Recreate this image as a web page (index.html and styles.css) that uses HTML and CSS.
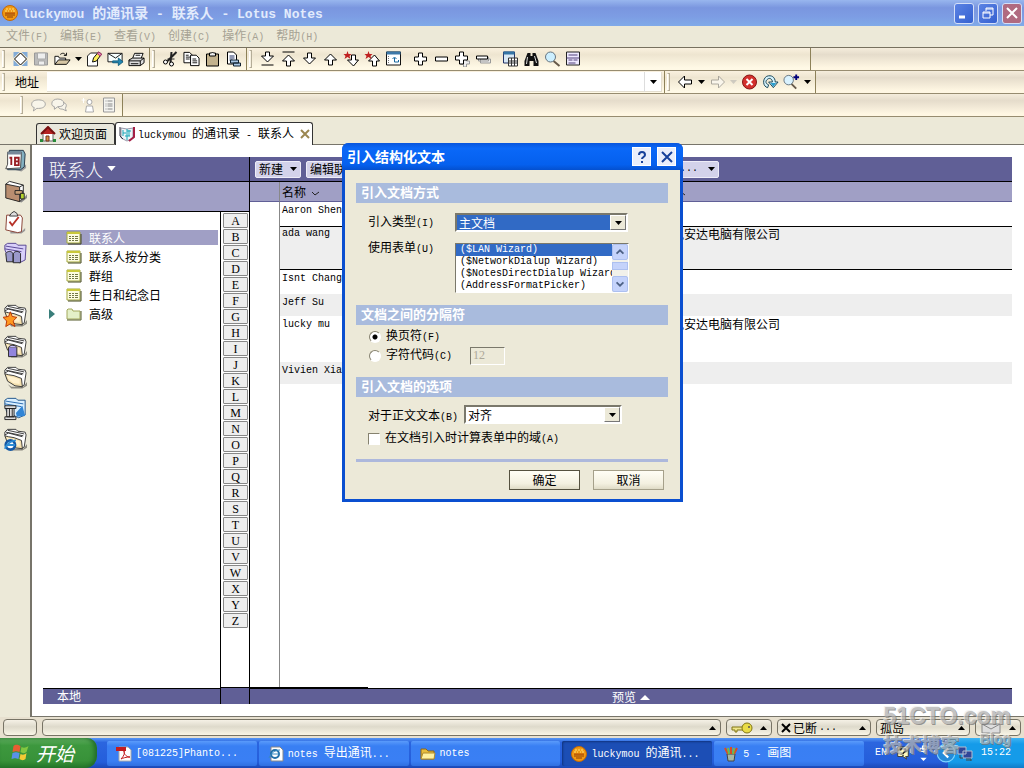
FILE: index.html
```html
<!DOCTYPE html>
<html lang="zh-CN">
<head>
<meta charset="utf-8">
<title>luckymou 的通讯录 - 联系人 - Lotus Notes</title>
<link rel="stylesheet" href="styles.css">
</head>
<body>
<svg class="defs" aria-hidden="true">
  <defs>
    <symbol id="caret" viewBox="0 0 7 4"><path d="M0 0h7L3.500 4z" fill="currentColor"/></symbol>
    <symbol id="caret-up" viewBox="0 0 7 4"><path d="M0 4h7L3.500 0z" fill="currentColor"/></symbol>
    <symbol id="down" viewBox="0 0 16 16"><path d="M6 2h4v5h4l-6 6-6-6h4z" fill="#fff" stroke="#000"/></symbol>
    <symbol id="up" viewBox="0 0 16 16"><path d="M6 14h4V9h4L8 3 2 9h4z" fill="#fff" stroke="#000"/></symbol>
    <symbol id="folder" viewBox="0 0 26 26">
      <path d="M5 20l4 3h13l4-5v4l-5 3H9z" fill="#8c8a80"/>
      <path d="M2 9V5l3-3h9l2 2 8 1 1 3-2 13-3 2" fill="#fff" stroke="#333"/>
      <path d="M3 5l19 4M5 3l18 4M2 8l4-2 15 4" stroke="#333" fill="none"/>
      <path d="M2 9l4 1 6 1 8 3 1 9-8-1-8-5z" fill="#f3dfae" stroke="#333"/>
      <path d="M4 11l8 2 6 2v5l-7-1-5-4z" fill="#fff1ce"/>
    </symbol>
    <symbol id="grid-icon" viewBox="0 0 16 14">
      <path d="M1 1h13v11H1z" fill="#fdfce0" stroke="#a2a83c"/><path d="M1 2h13" stroke="#c9c83a" stroke-width="2"/>
      <path d="M3 5h2v1H3zm3 0h2v1H6zm3 0h3v1H9zM3 7h2v1H3zm3 0h2v1H6zm3 0h3v1H9zM3 9h2v1H3zm3 0h2v1H6zm3 0h3v1H9z" fill="#727846"/><path d="M2 13h13V3" fill="none" stroke="#42461a"/>
    </symbol>
    <symbol id="lotus" viewBox="0 0 16 16">
      <circle cx="8" cy="8" r="7.500" fill="#f29a13" stroke="#c46a08"/>
      <path d="M4 8v3m2-3v5m2-5v5m2-5v5m2-5v3" stroke="#8f3c08"/><path d="M3 6h2m1 0h1m2 0h1m1 0h2M4 4h2m1 0h2m1 0h2" stroke="#ffe27a"/><path d="M3 8h10" stroke="#b75008"/>
    </symbol>
    <symbol id="speech" viewBox="0 0 20 16"><path d="M10 2c5 0 8 2 8 5s-3 5-8 5H8l-4 3 1-4C2 10 2 9 2 7c0-3 3-5 8-5z" fill="#f8f5ea" stroke="#999"/></symbol>
  </defs>
</svg>

<header class="titlebar">
  <svg class="i16"><use href="#lotus"/></svg>
  <h1><span class="lat">luckymou </span>的通讯录<span class="lat"> - </span>联系人<span class="lat"> - Lotus Notes</span></h1>
  <button class="win" aria-label="最小化"><svg viewBox="0 0 18 18"><path d="M4 13h6" stroke="#fff" stroke-width="3"/></svg></button>
  <button class="win" aria-label="还原"><svg viewBox="0 0 18 18"><path d="M7 7V4h7v7h-3M7 5h7M4 8h7v6H4zm0 1h7" fill="none" stroke="#fff"/></svg></button>
  <button class="win close" aria-label="关闭"><svg viewBox="0 0 18 18"><path d="M4 4l10 10M14 4L4 14" stroke="#fff" stroke-width="2"/></svg></button>
</header>

<nav class="menubar">
  <button>文件<span class="lat">(F)</span></button><button>编辑<span class="lat">(E)</span></button><button>查看<span class="lat">(V)</span></button><button>创建<span class="lat">(C)</span></button><button>操作<span class="lat">(A)</span></button><button>帮助<span class="lat">(H)</span></button>
</nav>

<div class="bar">
  <div class="group">
    <span class="handle"></span>
    <button aria-label="设计"><svg viewBox="0 0 16 16"><path d="M1 1h6L1 7zM15 1H9l6 6zM1 15V9l6 6zM15 15H9l6-6z" fill="#83acd8"/><path d="M8 2l6 6-6 6-6-6z" fill="#fff" stroke="#000"/></svg></button>
    <button aria-label="保存"><svg viewBox="0 0 16 16"><path d="M1 2h13v12H1z" fill="#bbb" stroke="#999"/><path d="M4 2h8v6H4zM5 10h6v4H5z" fill="#eee" stroke="#aaa"/></svg></button>
    <button aria-label="打开"><svg viewBox="0 0 19 16"><path d="M1 14V5h4l1 2h7v3" fill="#fff" stroke="#000"/><path d="M1 14l4-5h13l-4 5z" fill="#d6c6a4" stroke="#000"/><path d="M7 3c2-2 5-2 6 1m-2 0h3V1" fill="none" stroke="#000"/></svg></button>
    <button class="mini" aria-label="打开选项"><svg><use href="#caret"/></svg></button>
    <button aria-label="编辑"><svg viewBox="0 0 16 16"><path d="M1 5l3-3h7v13H1z" fill="#fff" stroke="#222"/><path d="M6 11l1-4 5-6 3 2-5 7z" fill="#fff15a" stroke="#111"/><path d="M12 1l3 2-1 2-3-2z" fill="#e090c0" stroke="#a36"/></svg></button>
    <button aria-label="发送"><svg viewBox="0 0 18 16"><path d="M1 2h15v9H1z" fill="#f7ffff" stroke="#111"/><path d="M1 2l8 5 7-5" fill="none" stroke="#111"/><path d="M6 10h6V7l5 4-5 4v-3H6z" fill="#2487b2" stroke="#146080"/></svg></button>
    <button aria-label="打印"><svg viewBox="0 0 18 16"><path d="M5 7l2-5h9l-2 5" fill="#fff" stroke="#000"/><path d="M1 9l4-2h12v5l-4 3H1z" fill="#ddd" stroke="#000"/><path d="M1 10h12l4-3M13 10v5M3 13h8M8 4h5" fill="none" stroke="#000"/></svg></button>
  </div>
  <div class="group">
    <span class="handle"></span>
    <button aria-label="剪切"><svg viewBox="0 0 16 16"><path d="M14 1L5 10M9 1L8 12" stroke="#222" stroke-width="2"/><circle cx="3" cy="11" r="2" fill="#fff" stroke="#000"/><circle cx="9" cy="13" r="2" fill="#fff" stroke="#000"/><path d="M5 8h7" stroke="#222"/></svg></button>
    <button aria-label="复制"><svg viewBox="0 0 18 16"><path d="M1 1h6l3 3v8H1z" fill="#fff" stroke="#000"/><path d="M3 4h3M3 6h5M3 8h4" stroke="#111"/><path d="M8 4h6l3 3v8H8z" fill="#fff" stroke="#000"/><path d="M10 8h4m-4 2h5m-5 2h5" stroke="#111"/></svg></button>
    <button aria-label="粘贴"><svg viewBox="0 0 16 16"><path d="M2 3h12v12H2z" fill="#c3b28d" stroke="#000"/><path d="M5 5V2h2l1-1 1 1h2v3z" fill="#eee" stroke="#000"/></svg></button>
    <button aria-label="选择性粘贴"><svg viewBox="0 0 16 16"><path d="M2 1h6l3 3v9H2z" fill="#fff" stroke="#000"/><path d="M4 5h5M4 7h5M4 9h3" stroke="#236"/><path d="M5 9h8v3H5zM8 12h7v3H8z" fill="#a9c7e4" stroke="#123"/></svg></button>
  </div>
  <div class="group wide">
    <span class="handle"></span>
    <button aria-label="末尾"><svg viewBox="0 0 16 16"><path d="M6 1h4v4h4l-6 6-6-6h4z" fill="#fff" stroke="#000"/><path d="M2 14h12" stroke="#000"/></svg></button>
    <button aria-label="开头"><svg viewBox="0 0 16 16"><path d="M6 15h4v-5h4L8 4l-6 6h4z" fill="#fff" stroke="#000"/><path d="M2 1h12" stroke="#000"/></svg></button>
    <button aria-label="下一个"><svg><use href="#down"/></svg></button>
    <button aria-label="上一个"><svg><use href="#up"/></svg></button>
    <button aria-label="下一未读"><svg viewBox="0 0 16 16"><path d="M8 4h4v5h3l-5 6-6-6h4z" fill="#fff" stroke="#000"/><path d="M4 0l1 3h3L6 5l1 3-3-2-3 2 1-3-2-2h3z" fill="#c02020"/></svg></button>
    <button aria-label="上一未读"><svg viewBox="0 0 16 16"><path d="M8 15h4v-5h3l-5-6-6 6h4z" fill="#fff" stroke="#000"/><path d="M4 0l1 3h3L6 5l1 3-3-2-3 2 1-3-2-2h3z" fill="#c02020"/></svg></button>
    <button aria-label="导航"><svg viewBox="0 0 16 16"><path d="M1 1h14v13H1z" fill="#fff" stroke="#111"/><path d="M1 2h14" stroke="#3d78a8" stroke-width="3"/><path d="M3 5v8" stroke="#777" stroke-dasharray="1 1"/><path d="M7 8l2-2 2 2M9 7v4h4V9" fill="none" stroke="#17679e"/></svg></button>
    <button class="space" aria-label="展开"><svg viewBox="0 0 16 16"><path d="M6 2h4v4h4v4h-4v4H6v-4H2V6h4z" fill="#fff" stroke="#000"/></svg></button>
    <button aria-label="折叠"><svg viewBox="0 0 16 16"><path d="M2 6h12v4H2z" fill="#fff" stroke="#000"/></svg></button>
    <button aria-label="全部展开"><svg viewBox="0 0 16 16"><path d="M9 7h3v3h3v3h-3v3H9v-3H6" fill="#eee" stroke="#999"/><path d="M5 1h4v4h4v4H9v4H5V9H1V5h4z" fill="#fff" stroke="#000"/></svg></button>
    <button aria-label="全部折叠"><svg viewBox="0 0 16 16"><path d="M5 8h10v4H5zM3 6h10v4H3z" fill="#eee" stroke="#999"/><path d="M1 5h11v3H1z" fill="#fff" stroke="#000"/></svg></button>
    <button class="space" aria-label="日历"><svg viewBox="0 0 16 16"><path d="M1 1h11v11H1z" fill="#d8e8f5" stroke="#236"/><path d="M1 2h11" stroke="#3474a5" stroke-width="3"/><path d="M6 7h9v8H6zM6 10h9M6 12h9M9 7v8m3-8v8" fill="#fff" stroke="#333"/></svg></button>
    <button aria-label="查找"><svg viewBox="0 0 16 16"><path d="M4 2h3v3h2V2h3l3 8v5h-5v-5H6v5H1v-5z" fill="#111"/><path d="M4 6l-1 7m8-8l2 7" stroke="#ddd"/></svg></button>
    <button aria-label="搜索"><svg viewBox="0 0 16 16"><path d="M9 10l6 5" stroke="#655949" stroke-width="2"/><circle cx="6" cy="6" r="5" fill="#ccefff" stroke="#657480"/></svg></button>
    <button aria-label="属性"><svg viewBox="0 0 16 16"><path d="M1 1h13v13H1z" fill="#eee9ff" stroke="#222"/><path d="M1 7h13M3 4h9M3 9h4m1 0h4M3 12h7" stroke="#514078"/></svg></button>
  </div>
</div>

<div class="bar">
  <div class="group address">
    <span class="handle"></span>
    <label for="addr">地址</label>
    <div class="combo"><input id="addr" type="text"><button aria-label="地址列表"><svg class="c"><use href="#caret"/></svg></button></div>
  </div>
  <div class="group browse">
    <span class="handle"></span>
    <button aria-label="后退"><svg viewBox="0 0 16 16"><path d="M1 8l6-6v4h7v4H7v4z" fill="#fff" stroke="#000"/></svg></button>
    <button class="mini" aria-label="后退列表"><svg><use href="#caret"/></svg></button>
    <button class="dim" aria-label="前进"><svg viewBox="0 0 16 16"><path d="M15 8L9 2v4H2v4h7v4z" fill="#fff" stroke="#666"/></svg></button>
    <button class="mini dim" aria-label="前进列表"><svg><use href="#caret"/></svg></button>
    <button aria-label="停止"><svg viewBox="0 0 16 16"><circle cx="8" cy="8" r="7" fill="#d3302d" stroke="#851514"/><path d="M5 5l6 6m0-6l-6 6" stroke="#fff" stroke-width="2"/></svg></button>
    <button aria-label="刷新"><svg viewBox="0 0 18 16"><path d="M6 14C1 13 0 5 5 2c5-2 9 1 9 6h3l-5 6-5-6h4c0-3-3-5-5-3-3 2-2 5 1 6z" fill="#d3f1fb" stroke="#123f52"/><path d="M9 9h6l-3 4z" fill="#2a9dcc"/></svg></button>
    <button aria-label="搜索"><svg viewBox="0 0 18 16"><path d="M9 10l5 5" stroke="#655949" stroke-width="2"/><circle cx="6" cy="6" r="5" fill="#d9f2ff" stroke="#657480"/><path d="M14 0v6m-3-3h6" stroke="#00007a" stroke-width="2"/></svg></button>
    <button class="mini" aria-label="搜索列表"><svg><use href="#caret"/></svg></button>
  </div>
</div>

<div class="bar">
  <div class="group chat">
    <span class="handle"></span>
    <button aria-label="聊天"><svg><use href="#speech"/></svg></button>
    <button aria-label="群聊"><svg viewBox="0 0 20 16"><path d="M12 5c4 0 6 1 6 4l-1 3 1 3-4-2c-4 0-6-2-6-4s1-4 4-4z" fill="#f8f5ea" stroke="#999"/><path d="M8 1c4 0 7 2 7 5s-3 4-7 4l-4 3v-3C1 9 1 8 1 6c0-3 3-5 7-5z" fill="#f8f5ea" stroke="#999"/></svg></button>
    <button class="space" aria-label="人员"><svg viewBox="0 0 16 16"><circle cx="9" cy="5" r="2.500" fill="#fff" stroke="#aaa"/><path d="M5 15l1-6h6l1 6z" fill="#fff" stroke="#aaa"/><path d="M3 1v5M1 3h4" stroke="#fff"/></svg></button>
    <button aria-label="列表"><svg viewBox="0 0 16 16"><path d="M2 1h11v14H2z" fill="#f4f4f0" stroke="#999"/><path d="M4 4h1m1 0h5M4 7h1m1 0h5M4 9h1m1 0h5M4 12h1m1 0h5" stroke="#888"/></svg></button>
  </div>
</div>

<div class="tabs">
  <a class="tab" href="#home"><svg class="i16" viewBox="0 0 16 16"><path d="M3 7h10v8H3z" fill="#fff" stroke="#666"/><path d="M1 8l7-7 7 7" fill="#b52424" stroke="#711" stroke-width="2"/><path d="M6 10h3v5H6z" fill="#d89040" stroke="#732"/><path d="M0 13h3v3H0m13-3h3v3h-3" fill="#278a38"/></svg>欢迎页面</a>
  <a class="tab on" href="#contacts"><svg class="i16" viewBox="0 0 16 16"><path d="M2 2l6 1 6-1v10l-6 3-6-3z" fill="#eef4f7" stroke="#99a"/><path d="M8 3v11M4 4v6m0-3h3m3-3v6M8 5h4M6 10h5" stroke="#18a7b9"/><path d="M1 1v9l3 3" fill="none" stroke="#334"/><path d="M15 1v10l-5 4" fill="none" stroke="#a52045" stroke-width="2"/></svg><span><span class="lat">luckymou </span>的通讯录<span class="lat"> - </span>联系人</span><svg class="x" viewBox="0 0 10 10"><path d="M1 1l8 8M9 1L1 9" stroke="#9b8751" stroke-width="2"/></svg></a>
</div>

<main>
  <aside class="bookmarks">
    <a href="#cal" aria-label="日历"><svg viewBox="0 0 26 26"><path d="M5 21h16l4-4v4l-5 4z" fill="#999"/><path d="M7 2h15l2 4-1 14-4 3H5z" fill="#83b0c1" stroke="#234"/><path d="M5 4h15l-1 17-16 1 2-5z" fill="#fff" stroke="#444"/><path d="M5 5h15" stroke="#789" stroke-width="3"/><path d="M7 10h2v8m4-8h4v8h-4zm0 4h4" fill="none" stroke="#981e24" stroke-width="2"/></svg></a>
    <a href="#book" aria-label="通讯录"><svg viewBox="0 0 26 26"><path d="M8 21h14l4-5v4l-6 5z" fill="#888"/><path d="M3 5l4-3 15 4v14l-4 4z" fill="#fff" stroke="#222"/><path d="M3 5l15 3v16L3 20z" fill="#b98e70" stroke="#222"/><path d="M18 8l4-2" stroke="#222"/><path d="M13 12h8v4h-8z" fill="#c8a078" stroke="#222"/><path d="M19 15h4v6h-4z" fill="#b6d72e" stroke="#222"/></svg></a>
    <a href="#todo" aria-label="待办"><svg viewBox="0 0 26 26"><path d="M8 22h13l3-3v3l-4 3H8z" fill="#999"/><path d="M4 5h15l2 3-1 15-4 1L3 21z" fill="#fff" stroke="#833a2c"/><path d="M7 6l2-3 3-2 3 2 1 3z" fill="#ddd" stroke="#333"/><path d="M7 12l3 4 7-9" fill="none" stroke="#b73228" stroke-width="2"/></svg></a>
    <a href="#rep" aria-label="复本"><svg viewBox="0 0 26 26"><path d="M2 9V4l3-2h9l2 2h9l-1 16-6 3-13-7z" fill="#d8cffa" stroke="#52418f"/><path d="M3 5l19 3M2 8l18 3" stroke="#52418f"/><path d="M3 13c2-3 6-3 8 0v9H4zM11 13c2-3 6-3 8 0v10h-8z" fill="#9b9acb" stroke="#222"/></svg></a>
    <a class="later" href="#fav" aria-label="收藏"><svg viewBox="0 0 26 26"><use href="#folder"/><path d="M8 9l2 5 5 1-4 4 2 6-5-3-5 3 1-6-4-4 6-1z" fill="#ff9820" stroke="#b52e00"/></svg></a>
    <a href="#db" aria-label="数据库"><svg viewBox="0 0 26 26"><use href="#folder"/><path d="M6 14h9v10H6z" fill="#9285dd" stroke="#222"/><path d="M6 14c1-3 8-3 9 0" fill="#cac2ff" stroke="#222"/></svg></a>
    <a href="#more" aria-label="更多书签"><svg viewBox="0 0 26 26"><use href="#folder"/></svg></a>
    <a href="#hist" aria-label="历史"><svg viewBox="0 0 26 26"><path d="M2 9V4l3-2h9l2 2h8v16l-7 3-13-6z" fill="#d9efff" stroke="#174d86"/><path d="M3 5l19 3M2 8l18 3" stroke="#2265ad"/><path d="M14 18l7-8 3 11-9 1z" fill="#3185d5"/><path d="M2 10h12v3H2zM4 13h8v9H4zM2 22h12v3H2z" fill="#ddd" stroke="#222"/><path d="M7 13v9m3-9v9" stroke="#222"/></svg></a>
    <a href="#ie" aria-label="浏览器"><svg viewBox="0 0 26 26"><use href="#folder"/><circle cx="8" cy="19" r="5" fill="#fff" stroke="#1559a5" stroke-width="3"/><path d="M4 19h9M2 23c2-5 7-9 12-9" fill="none" stroke="#2d8dd5" stroke-width="2"/></svg></a>
  </aside>

  <div class="workspace">
    <section class="left">
      <div class="left-title"><button>联系人<svg viewBox="0 0 10 6"><path d="M0 0h10L5 6z" fill="#fff"/></svg></button></div>
      <div class="left-sub"></div>
      <div class="left-body">
        <div class="nav-pane">
          <nav class="views">
            <a class="on" href="#v1"><i></i><svg><use href="#grid-icon"/></svg>联系人</a>
            <a href="#v2"><i></i><svg><use href="#grid-icon"/></svg>联系人按分类</a>
            <a href="#v3"><i></i><svg><use href="#grid-icon"/></svg>群组</a>
            <a href="#v4"><i></i><svg><use href="#grid-icon"/></svg>生日和纪念日</a>
            <a href="#v5"><i><svg viewBox="0 0 6 10"><path d="M0 0l6 5-6 5z" fill="#397e7a"/></svg></i><svg viewBox="0 0 16 14"><path d="M1 12V3l1-1h4l1 2h7v8z" fill="#e4f0c8" stroke="#a2a85c"/><path d="M1 13h14V4" fill="none" stroke="#555b2a"/></svg>高级</a>
          </nav>
          <footer>本地</footer>
        </div>
        <div class="alpha">
          <div class="letters"><button>A</button><button>B</button><button>C</button><button>D</button><button>E</button><button>F</button><button>G</button><button>H</button><button>I</button><button>J</button><button>K</button><button>L</button><button>M</button><button>N</button><button>O</button><button>P</button><button>Q</button><button>R</button><button>S</button><button>T</button><button>U</button><button>V</button><button>W</button><button>X</button><button>Y</button><button>Z</button></div>
          <footer></footer>
        </div>
      </div>
    </section>
    <section class="right">
      <div class="actions">
        <button>新建<svg class="c"><use href="#caret"/></svg></button>
        <button>编辑联系人</button>
        <button class="more"><span class="lat">...</span><svg class="c"><use href="#caret"/></svg></button>
      </div>
      <div class="table-wrap">
        <table>
          <thead><tr><th class="gut"></th><th class="name">名称<svg viewBox="0 0 9 5"><path d="M1 1l3 3 4-3" fill="none" stroke="#222"/></svg></th><th><svg viewBox="0 0 9 5"><path d="M1 4l3-3 4 3" fill="none" stroke="#222"/></svg></th></tr></thead>
          <tbody>
            <tr><td class="gut"></td><td class="lat">Aaron Shen</td><td></td></tr>
            <tr class="sel"><td class="gut"></td><td class="lat">ada wang</td><td>凯安达电脑有限公司</td></tr>
            <tr><td class="gut"></td><td class="lat">Isnt Chang</td><td></td></tr>
            <tr class="alt"><td class="gut"></td><td class="lat">Jeff Su</td><td></td></tr>
            <tr class="tall"><td class="gut"></td><td class="lat">lucky mu</td><td>凯安达电脑有限公司</td></tr>
            <tr class="alt"><td class="gut"></td><td class="lat">Vivien Xiao</td><td></td></tr>
          </tbody>
        </table>
        <div class="rest"></div>
        <div class="end-line"></div>
      </div>
      <footer><button>预览<svg viewBox="0 0 10 6"><path d="M0 6h10L5 1z" fill="#fff"/></svg></button></footer>
    </section>
  </div>
</main>

<div class="status">
  <span class="box first"></span>
  <button class="box grow" aria-label="消息"><svg class="c"><use href="#caret-up"/></svg></button>
  <button class="box key" aria-label="安全"><svg class="ico" viewBox="0 0 22 12"><path d="M13 5H1v3h3v2h2V8h7" fill="#eee58a" stroke="#817614"/><ellipse cx="16" cy="6" rx="5" ry="5" fill="#e9dc47" stroke="#817614"/><circle cx="18" cy="5" r="1" fill="#555"/></svg><svg class="c"><use href="#caret-up"/></svg></button>
  <button class="box mid"><svg class="x" viewBox="0 0 10 10"><path d="M1 1l8 8M9 1L1 9" stroke="#000" stroke-width="2"/></svg>已断<span class="lat">...</span><svg class="c"><use href="#caret-up"/></svg></button>
  <button class="box mid">孤岛<svg class="c"><use href="#caret-up"/></svg></button>
  <button class="box key" aria-label="邮件"><svg class="ico" viewBox="0 0 22 12"><path d="M2 2h18v9H2z" fill="#ddd" stroke="#888"/><path d="M2 2l9 5 9-5" fill="none" stroke="#888"/></svg><svg class="c"><use href="#caret-up"/></svg></button>
</div>

<div class="taskbar">
  <button class="start"><svg viewBox="0 0 18 18"><path d="M2 2c3-2 4-1 7 0L8 8C5 7 4 7 1 8z" fill="#e85d32"/><path d="M10 3c2 1 4 1 7-1l-2 6c-3 2-4 1-6 0z" fill="#82c740"/><path d="M1 9c3-1 4-1 7 0l-1 6c-3-1-4-1-7 0z" fill="#5991e8"/><path d="M9 10c2 1 4 1 6-1l-1 6c-3 2-4 1-6 0z" fill="#f3ca35"/></svg>开始</button>
  <div class="tasks">
    <button><svg class="i16" viewBox="0 0 16 16"><path d="M3 1h9l3 3v11H3z" fill="#fff" stroke="#aaa"/><path d="M0 1h10v4H0z" fill="#c31c20"/><path d="M5 13c3-3 4-6 3-8 0 4 3 6 6 6-4 0-7 1-9 2z" fill="none" stroke="#c31c20"/></svg><span class="lat">[081225]Phanto...</span></button>
    <button><svg class="i16" viewBox="0 0 16 16"><path d="M3 1h9l3 3v11H3z" fill="#fff" stroke="#888"/><circle cx="7" cy="8" r="4" fill="none" stroke="#226fa9" stroke-width="2"/><path d="M4 8h7M1 12c2-5 6-8 11-8" fill="none" stroke="#368ac4"/></svg><span><span class="lat">notes </span>导出通讯<span class="lat">...</span></span></button>
    <button><svg class="i16" viewBox="0 0 16 16"><path d="M1 13V3h5l2 2h6v8z" fill="#e7bd3d" stroke="#8d671a"/><path d="M1 13l2-6h12l-1 6z" fill="#fff1a0" stroke="#b18c2e"/></svg><span class="lat">notes</span></button>
    <button class="on"><svg class="i16"><use href="#lotus"/></svg><span><span class="lat">luckymou </span>的通讯<span class="lat">...</span></span></button>
    <button><svg class="i16" viewBox="0 0 16 16"><path d="M4 8h8l-1 7H5z" fill="#a8b7a5" stroke="#444"/><path d="M5 8L2 2m6 6V1m3 7l3-6" stroke="#d94c24" stroke-width="2"/><path d="M6 8L5 2m5 6l1-6" stroke="#72bd42" stroke-width="2"/></svg><span><span class="lat">5 - </span>画图</span></button>
  </div>
  <div class="lang"><span class="lat">EN</span><svg class="i16" viewBox="0 0 16 16"><path d="M2 1h12v11h-3l1 3-4-3H2z" fill="#fff9bd" stroke="#333"/><path d="M5 5c0-3 6-3 6 0 0 2-3 2-3 4m0 1v1" fill="none" stroke="#222" stroke-width="2"/></svg><svg class="lang-opt" viewBox="0 0 8 16"><path d="M3 1h4v3H3zM1 3h4v3H1z" fill="#3269cc" stroke="#fff"/><path d="M1 12h6l-3 3z" fill="#fff"/></svg></div>
  <div class="tray"><button aria-label="显示图标"><svg viewBox="0 0 18 18"><circle cx="9" cy="9" r="8" fill="#238bd9" stroke="#7bd3ff"/><path d="M11 5L7 9l4 4" fill="none" stroke="#fff" stroke-width="2"/></svg></button><svg class="i16" viewBox="0 0 16 16"><path d="M1 2h8v7H1zM6 6h9v7H6z" fill="#304698" stroke="#b4bed0"/><path d="M3 10v3h3m3 1h5v2H9" fill="none" stroke="#444"/></svg><span class="lat clock">15:22</span></div>
</div>

<form class="dialog" role="dialog" aria-labelledby="dt">
  <div class="d-title"><h2 id="dt">引入结构化文本</h2>
    <button type="button" aria-label="帮助"><svg viewBox="0 0 16 16"><path d="M5 6c0-4 6-4 6 0 0 2-3 2-3 4m0 2v2" fill="none" stroke="#17419a" stroke-width="2"/></svg></button>
    <button type="button" aria-label="关闭"><svg viewBox="0 0 16 16"><path d="M3 3l10 10M13 3L3 13" stroke="#17419a" stroke-width="2"/></svg></button>
  </div>
  <div class="d-body">
    <h3>引入文档方式</h3>
    <div class="row r1"><label for="type">引入类型<span class="lat">(I)</span></label><div class="drop"><select id="type" class="hot"><option>主文档</option></select><span class="btn"><svg class="c"><use href="#caret"/></svg></span></div></div>
    <div class="row r2"><label for="form">使用表单<span class="lat">(U)</span></label>
      <div class="list"><select id="form" size="4"><option class="cur">($LAN Wizard)</option><option>($NetworkDialup Wizard)</option><option>($NotesDirectDialup Wizard)</option><option>(AddressFormatPicker)</option></select>
      <div class="scroll"><span><svg viewBox="0 0 14 14"><path d="M3 9l4-4 4 4" fill="none" stroke="#4d6185" stroke-width="2"/></svg></span><b></b><span><svg viewBox="0 0 14 14"><path d="M3 5l4 4 4-4" fill="none" stroke="#4d6185" stroke-width="2"/></svg></span></div></div></div>
    <h3>文档之间的分隔符</h3>
    <div class="checks">
      <div><input type="radio" name="sep" id="ff" checked><label for="ff">换页符<span class="lat">(F)</span></label></div>
      <div><input type="radio" name="sep" id="cc"><label for="cc">字符代码<span class="lat">(C)</span></label><input class="code" type="text" value="12" disabled aria-label="代码"></div>
    </div>
    <h3>引入文档的选项</h3>
    <div class="row r3"><label for="body">对于正文文本<span class="lat">(B)</span></label><div class="drop"><select id="body"><option>对齐</option></select><span class="btn"><svg class="c"><use href="#caret"/></svg></span></div></div>
    <div class="checks one"><div><input type="checkbox" id="calc"><label for="calc">在文档引入时计算表单中的域<span class="lat">(A)</span></label></div></div>
    <hr>
    <div class="buttons"><button type="button" class="def">确定</button><button type="button">取消</button></div>
  </div>
</form>
<div class="watermark" aria-hidden="true"><strong>51CTO.com</strong><span>技术博客<em>Blog</em></span></div>
</body>
</html>
```

FILE: styles.css
```css
* { box-sizing: border-box; }
body {
  margin: 0;
  height: 100vh;
  min-height: 700px;
  display: flex;
  flex-direction: column;
  position: relative;
  overflow: hidden;
  background: #ece9d8;
  color: #000;
  font: 12px/16px "Noto Sans CJK SC", sans-serif;
}
button, input, select { font: inherit; color: inherit; margin: 0; padding: 0; }
button { border: 0; background: none; white-space: nowrap; }
a { color: inherit; text-decoration: none; }
h1, h2, h3 { margin: 0; }
svg { display: block; flex: none; }
.defs { position: absolute; width: 0; height: 0; }
.lat { font-family: "Liberation Mono", monospace; font-size: 10px; white-space: pre; }
.i16 { width: 16px; height: 16px; }
.c { width: 7px; height: 4px; }

.titlebar {
  flex: none;
  height: 26px;
  padding: 0 2px;
  display: flex;
  align-items: center;
  gap: 4px;
  color: #e2ebfc;
  background: linear-gradient(#98b6ee, #7a96df 30%, #7d9de4 65%, #80aae8);
}
.titlebar h1 { flex: 1; font-size: 14px; line-height: 24px; white-space: nowrap; }
.titlebar h1 .lat { font-size: 13px; }
.win { width: 20px; height: 21px; border: 1px solid #d4dff8; border-radius: 3px; background: linear-gradient(135deg, #5c83e4, #3460d0); }
.win.close { background: #b06a80; }

.menubar { flex: none; height: 22px; display: flex; gap: 12px; padding: 1px 6px 0; color: #a6a294; border-bottom: 1px solid #77715f; }
.menubar button { height: 19px; }

.bar { flex: none; height: 23px; display: flex; border-bottom: 1px solid #978c70; background: linear-gradient(#f5eddc, #e5dccb 30%, #fff7e3 90%); }
.group { display: flex; align-items: center; padding: 0 2px; border-right: 1px solid #8d8159; background: linear-gradient(#faf1df, #eee5d0 30%, #fff9e6 90%); }
.group.wide { width: 564px; }
.group button { width: 21px; height: 20px; display: grid; place-items: center; }
.group button svg { width: 17px; height: 16px; }
.group .mini { width: 11px; }
.group .mini svg { width: 7px; height: 4px; }
.handle { width: 3px; height: 18px; margin-right: 5px; border: 1px solid #b5ad98; border-left-color: #fff; background: #f5efdf; }
.group .space { margin-left: 6px; }
.dim { color: #aaa; opacity: .5; }
.address { flex: 0 1 665px; }
.address label { width: 37px; padding-left: 5px; white-space: nowrap; }
.combo { flex: 1; display: flex; height: 20px; background: #fff; border: 1px solid #e4decf; border-width: 0 1px 1px 0; }
.combo input { flex: 1; min-width: 0; border: 0; background: none; }
.combo button { width: 17px; border-left: 1px solid #ddd; }
.combo button .c { width: 7px; height: 4px; }
.browse { padding-right: 2px; }
.chat { width: 123px; padding-left: 20px; }
.group.chat .space { margin-left: 8px; }

.tabs { flex: none; height: 28px; padding-left: 36px; display: flex; align-items: flex-end; border-bottom: 1px solid #77746a; }
.tab { height: 21px; padding: 0 7px 0 3px; display: flex; align-items: center; gap: 3px; border: 1px solid #333; border-bottom: 0; border-radius: 3px 3px 0 0; background: #e8e7dc; white-space: nowrap; }
.tab.on { height: 23px; margin-bottom: -1px; padding-right: 2px; background: #fff; }
.x { width: 10px; height: 10px; }
.tab .x { margin-left: 3px; }

main { flex: 1; min-height: 0; display: flex; }
.bookmarks { flex: none; width: 30px; padding: 3px 0 0 3px; }
.bookmarks a { display: block; height: 31px; }
.bookmarks svg { width: 24px; height: 25px; }
.bookmarks .later { margin-top: 31px; }
.workspace { flex: 1; min-width: 0; display: flex; padding: 12px 12px 12px 11px; background: #fff; border-left: 2px solid #77746a; border-bottom: 1px solid #77746a; }
.left { flex: none; width: 207px; display: flex; flex-direction: column; border-right: 1px solid #000; }
.left-title { height: 25px; background: #605f96; border-bottom: 1px solid #000; color: #fff; }
.left-title button { display: flex; align-items: center; gap: 4px; height: 23px; padding-left: 6px; font-size: 18px; font-weight: 300; }
.left-title svg { width: 9px; height: 5px; }
.left-sub { height: 30px; background: #a09fc5; border-bottom: 1px solid #000; }
.left-body { flex: 1; display: flex; }
.nav-pane { flex: 1; display: flex; flex-direction: column; }
.views { flex: 1; padding: 18px 2px 0 0; }
.views a { display: flex; align-items: center; height: 15px; margin-bottom: 4px; }
.views i { width: 23px; padding-left: 6px; }
.views i svg { width: 6px; height: 10px; }
.views a > svg { width: 16px; height: 14px; margin-right: 7px; }
.views .on { background: #a09fc5; color: #fff; }
.left footer, .right footer { flex: none; height: 16px; border-top: 1px solid #000; background: #605f96; color: #fff; line-height: 14px; }
.nav-pane footer { padding-left: 14px; }
.alpha { width: 29px; display: flex; flex-direction: column; border-left: 1px solid #000; }
.alpha .letters { flex: 1; padding: 1px 1px 0 2px; display: flex; flex-direction: column; gap: 1px; }
.alpha button { height: 15px; border: 1px solid #888; border-radius: 1px; background: #eee; font: 12px/12px "Liberation Serif", serif; }
.left .alpha footer { height: 17px; }

.right { flex: 1; min-width: 0; display: flex; flex-direction: column; }
.actions { height: 25px; display: flex; align-items: center; gap: 5px; padding: 0 5px; background: #605f96; border-bottom: 1px solid #000; }
.actions button { display: flex; align-items: center; gap: 7px; height: 17px; padding: 0 3px; border: 1px solid #eeedf8; border-radius: 2px; background: #d3d2ea; }
.actions .more { width: 60px; margin-left: 280px; justify-content: flex-end; gap: 10px; }
.table-wrap { flex: 1; display: flex; flex-direction: column; }
table { width: 100%; border-collapse: separate; border-spacing: 0; table-layout: fixed; }
th { height: 20px; padding: 0 2px; text-align: left; font-weight: 400; background: #a09fc5; border-bottom: 1px solid #605f96; line-height: 16px; }
th svg { display: inline-block; width: 9px; height: 5px; margin-left: 5px; vertical-align: middle; }
.gut { width: 30px; border-right: 1px solid #888; background: #fff; }
th.gut { background: #a09fc5; }
.name { width: 390px; }
td { height: 24px; padding: 0 2px; vertical-align: top; line-height: 16px; }
td.lat { line-height: 18px; }
.tall td { height: 46px; }
.sel td { height: 44px; }
.sel td:not(.gut) { background: #eee; border-top: 1px solid #000; border-bottom: 1px solid #000; line-height: 14px; }
.alt td { height: 22px; }
.alt td:not(.gut) { background: #eee; }
.rest { flex: 1; width: 30px; border-right: 1px solid #888; }
.end-line { width: 118px; height: 1px; background: #000; }
.right footer { display: flex; justify-content: center; }
.right footer button { display: flex; align-items: center; gap: 4px; }
.right footer svg { width: 10px; height: 6px; }

.status { flex: none; height: 21px; display: flex; gap: 5px; padding: 2px 3px 2px 3px; background: #e7e0cf; }
.box { display: flex; align-items: center; gap: 2px; height: 17px; padding: 0 4px; border: 1px solid #777365; border-radius: 4px; background: linear-gradient(#f5f1e6, #dedacb 45%, #f9f5e6); }
.box .c { margin-left: auto; }
.first { width: 34px; }
.grow { flex: 1; }
.key { width: 46px; }
.mid { width: 94px; padding-left: 3px; }
.ico { width: 22px; height: 12px; }

.taskbar { flex: none; height: 30px; display: flex; align-items: stretch; color: #fff; background: linear-gradient(#5596f5, #2b65df 15%, #245edb 80%, #1b48b5); }
.start { width: 97px; display: flex; align-items: center; gap: 6px; padding-left: 11px; border-radius: 0 10px 12px 0; background: linear-gradient(#60ae60, #3d983e 25%, #389239 75%, #267a2a); font-size: 19px; font-style: italic; box-shadow: inset -3px 0 4px #226d2a; }
.start svg { width: 19px; height: 18px; }
.tasks { flex: 1; min-width: 0; display: flex; gap: 2px; padding: 3px 11px 2px 10px; }
.tasks button { flex: 0 1 150px; min-width: 0; display: flex; align-items: center; gap: 4px; padding-left: 9px; border-radius: 2px; background: linear-gradient(#5a9bfb, #397ff3 20%, #3a7ff4 80%, #3070e0); overflow: hidden; }
.tasks .on { background: #1c4eb5; box-shadow: inset 1px 1px 2px #11347e; }
.lang { width: 73px; display: flex; align-items: center; gap: 9px; }
.lang .i16 { width: 14px; }
.lang-opt { width: 9px; height: 17px; }
.tray { width: 76px; display: flex; align-items: center; gap: 1px; background: linear-gradient(#3fb4f3, #159be9 20%, #159be9 80%, #117bc7); }
.tray button { margin-left: -12px; }
.tray button svg { width: 20px; height: 20px; }
.tray .clock { margin-left: 7px; }

.dialog { position: absolute; left: 342px; top: 143px; width: 341px; background: #ece9d8; border: 3px solid #0a4fd0; border-top: 0; border-radius: 7px 7px 0 0; }
.d-title { height: 27px; margin: 0 -3px; padding: 0 7px 0 5px; display: flex; align-items: center; gap: 6px; border-radius: 6px 6px 0 0; color: #fff; background: linear-gradient(#0855dd, #0a68f8 20%, #0560ee 80%, #0450cf); }
.d-title h2 { flex: 1; font-size: 14px; line-height: 20px; padding-bottom: 2px; }
.d-title button { width: 19px; height: 19px; border: 1px solid #fff; background: #e9eefb; display: grid; place-items: center; }
.d-title svg { width: 16px; height: 16px; }
.d-body { padding: 13px 12px 9px 11px; }
.d-body h3 { height: 20px; padding-left: 5px; background: #a9bbdd; color: #fff; font-size: 13px; line-height: 18px; }
.d-body h3 + .row { margin-top: 10px; }
.row { display: flex; padding-left: 12px; }
.row label { width: 87px; white-space: nowrap; }
.row.r1 { height: 18px; }
.row.r2 { margin: 12px 0; }
.row.r2 label { line-height: 8px; }
.drop { position: relative; width: 173px; height: 19px; }
.drop select { appearance: none; width: 100%; height: 100%; padding: 0 18px 0 2px; border: 2px solid; border-color: #7a786b #fff #fff #7a786b; border-radius: 0; background: #fff; line-height: 15px; outline: 0; }
.drop .hot { background: #316ac5; color: #fff; }
.drop .btn { position: absolute; right: 2px; top: 2px; bottom: 2px; width: 16px; display: grid; place-items: center; background: #ece9d8; border: 1px solid; border-color: #fff #777 #777 #fff; pointer-events: none; }
.list { display: flex; width: 174px; height: 50px; border: 1px solid; border-color: #7a786b #fff #fff #7a786b; background: #fff; }
.list select { flex: 1; min-width: 0; height: 48px; border: 0; border-radius: 0; background: #fff; overflow: hidden; scrollbar-width: none; outline: 0; font: 10px/12px "Liberation Mono", monospace; }
.list option { min-height: 12px; padding: 0 4px; line-height: 12px; }
.list .cur { background: #316ac5; color: #fff; }
.scroll { width: 16px; display: flex; flex-direction: column; justify-content: space-between; background: #f2f1ea; }
.scroll span { height: 16px; display: grid; place-items: center; border: 1px solid #adc0f0; border-radius: 2px; background: #c5d3fb; }
.scroll svg { width: 12px; height: 12px; }
.scroll b { height: 8px; border: 1px solid #adc0f0; background: #c5d3fb; margin-bottom: 5px; }
.checks { padding: 2px 0 12px 13px; }
.checks > div { display: flex; align-items: center; gap: 5px; height: 19px; }
.checks input[type="radio"], .checks input[type="checkbox"] { appearance: none; width: 12px; height: 12px; border: 1px solid; border-color: #86826f #fff #fff #86826f; border-radius: 50%; background: #fff; }
.checks input[type="radio"]:checked { background: radial-gradient(circle, #000 2px, #fff 3px); }
.checks input[type="checkbox"] { border-radius: 0; }
.checks .code { width: 35px; height: 18px; margin-left: 13px; padding: 0 2px; border: 1px solid; border-color: #7a786b #fff #fff #7a786b; background: #ece9d8; color: #aca899; font: 12px/14px "Liberation Serif", serif; }
.r3 .drop { width: 158px; }
.d-body h3 + .row.r3 { margin-top: 8px; }
.row.r3 { height: 19px; }
.row.r3 label { width: 96px; line-height: 19px; }
.checks.one { padding: 5px 0 11px 12px; }
.d-body hr { margin: 0; height: 3px; border: 0; background: #adb8dc; }
.buttons { display: flex; justify-content: flex-end; gap: 13px; padding: 8px 4px 0 0; }
.buttons button { width: 71px; height: 20px; line-height: 16px; border: 1px solid; border-color: #fff #77735e #77735e #fff; outline: 1px solid #a5a08a; outline-offset: -1px; background: linear-gradient(#fffef5, #f3f0e0 70%, #dfdbc6); }
.buttons .def { outline-color: #55513f; }

.watermark { position: absolute; right: 13px; bottom: 11px; display: flex; flex-direction: column; color: #b0b0b0; opacity: .75; text-shadow: 1px 1px 0 #777, -1px -1px 0 #eee; pointer-events: none; }
.watermark strong { font: bold 23px/30px "Liberation Sans", sans-serif; }
.watermark span { display: flex; justify-content: space-between; align-items: flex-start; font-size: 19px; line-height: 26px; font-weight: 700; }
.watermark em { font: bold 14px/16px "Liberation Sans", sans-serif; }
```
